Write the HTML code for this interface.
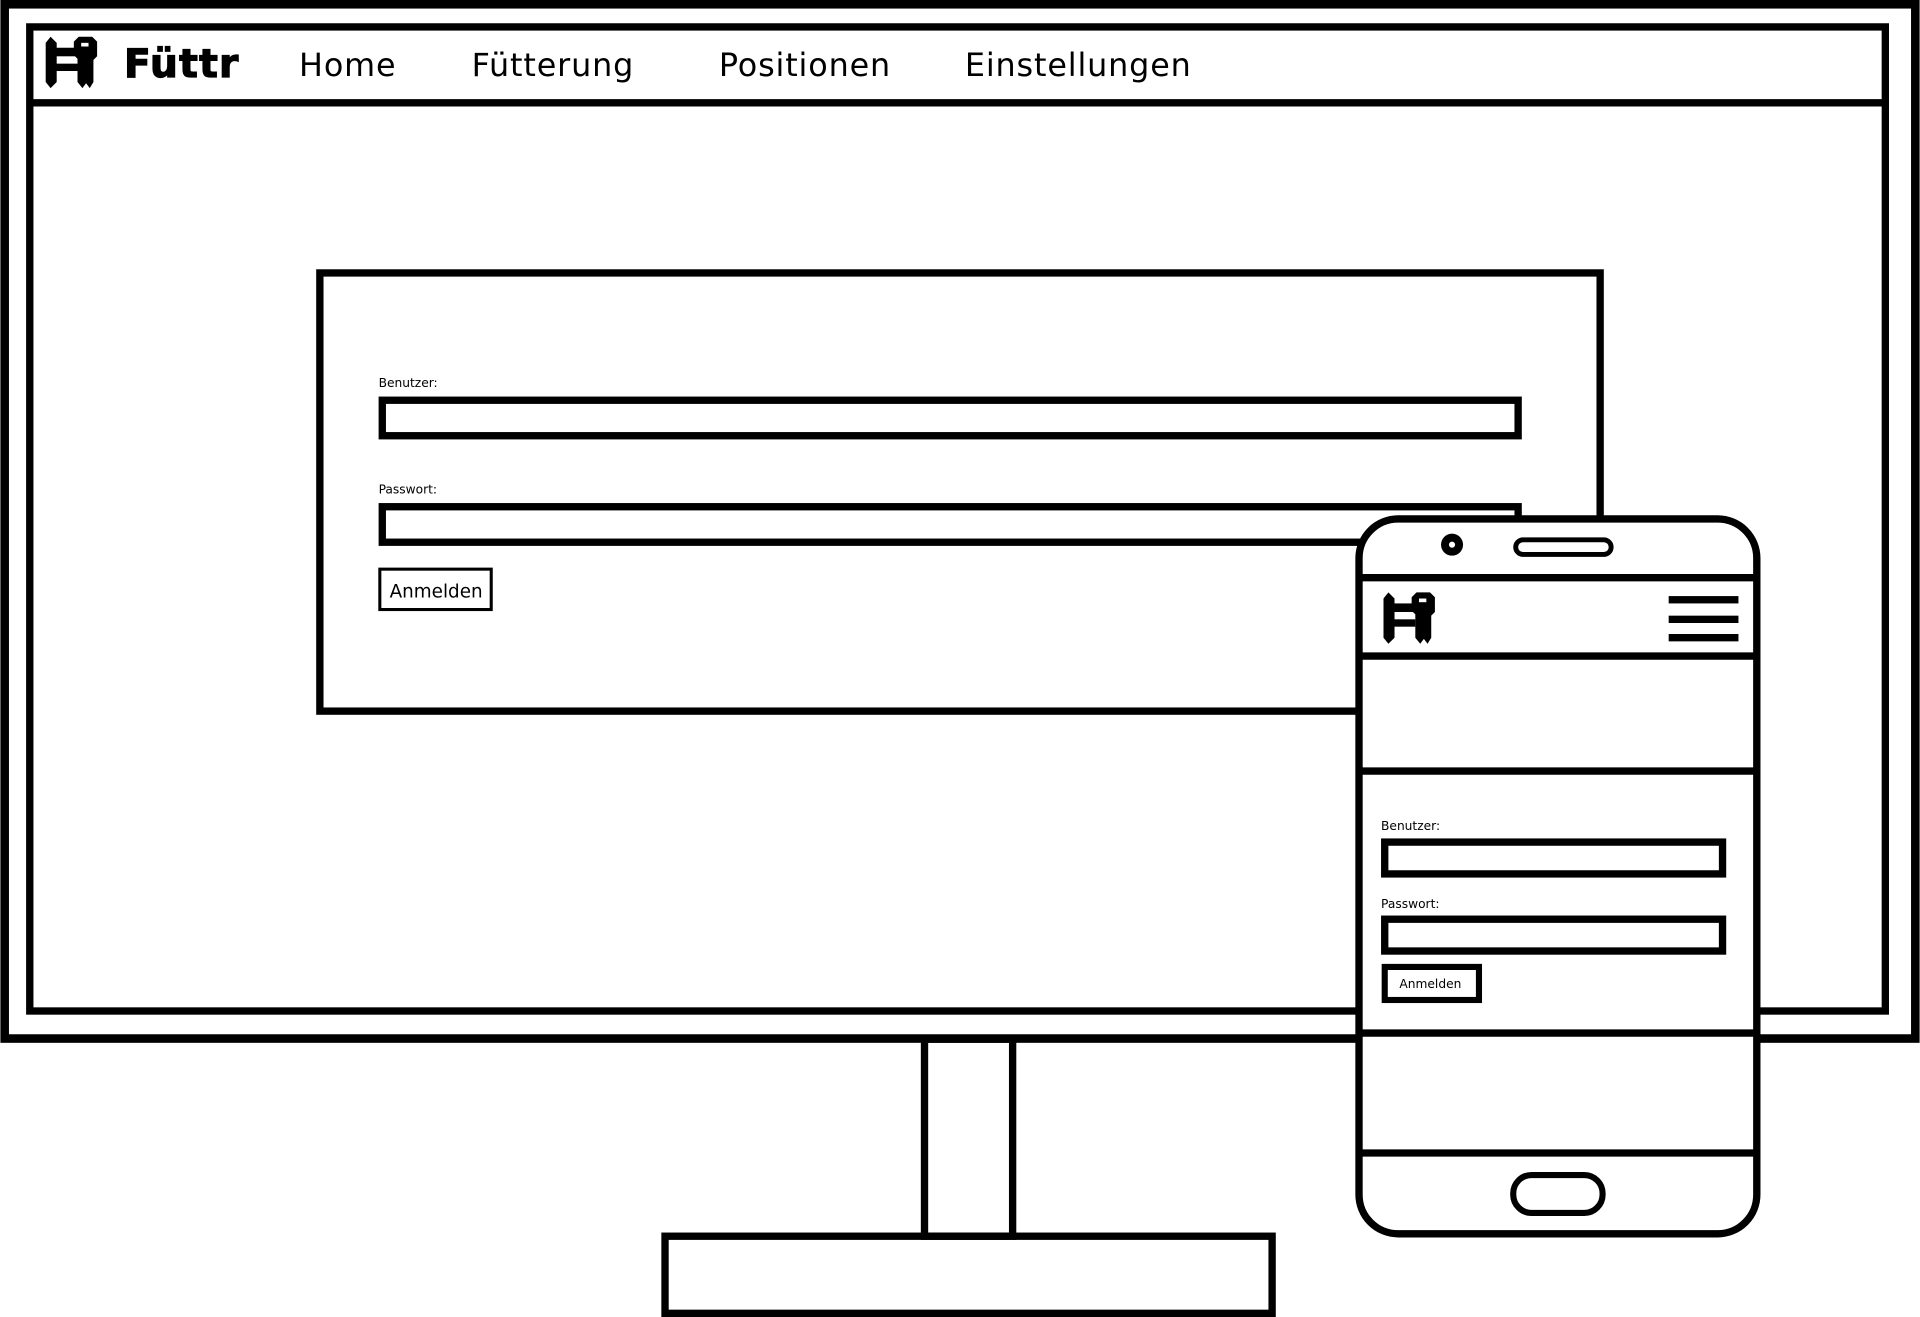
<!DOCTYPE html>
<html><head><meta charset="utf-8"><style>
html,body{margin:0;padding:0;background:#fff;width:1920px;height:1317px;overflow:hidden}
svg{display:block}
text{font-family:"DejaVu Sans","Liberation Sans",sans-serif;fill:#000}
</style></head><body>
<svg width="1920" height="1317" viewBox="0 0 1568 1076" xmlns="http://www.w3.org/2000/svg">
<defs>
<g id="logo">
<path d="M37 35 L41 30 L46 35 L46 67 L41 72 L37 67 Z" fill="#000"/>
<rect x="45" y="39" width="18" height="7" fill="#000"/>
<rect x="45" y="52" width="18" height="6" fill="#000"/>
<path d="M60 34 L64 30 L75 30 L79 34 L79 46 L76 49 L76 67 L73 72 L70 68 L67 72 L63 67 L63 48 L60 45 Z" fill="#000"/>
<rect x="66" y="35" width="6" height="3" fill="#fff"/>
</g>
</defs>
<rect x="3.5" y="3.5" width="1561" height="845" fill="none" stroke="#000" stroke-width="7"/>
<rect x="24" y="22" width="1516" height="804" fill="none" stroke="#000" stroke-width="6"/>
<line x1="24" y1="84" x2="1540" y2="84" stroke="#000" stroke-width="6"/>
<use href="#logo"/>
<text x="101" y="63" font-size="32" font-weight="bold" letter-spacing="1" stroke="#000" stroke-width="1">Füttr</text>
<text x="244" y="62" font-size="26" letter-spacing="0.7">Home</text>
<text x="385" y="62" font-size="26" letter-spacing="0.7">Fütterung</text>
<text x="587" y="62" font-size="26" letter-spacing="0.7">Positionen</text>
<text x="788" y="62" font-size="26" letter-spacing="0.7">Einstellungen</text>
<rect x="261" y="223" width="1046" height="358" fill="none" stroke="#000" stroke-width="6"/>
<text x="309" y="316" font-size="10">Benutzer:</text>
<rect x="312" y="327" width="928" height="29" fill="none" stroke="#000" stroke-width="6"/>
<text x="309" y="403" font-size="10">Passwort:</text>
<rect x="312" y="414" width="928" height="29" fill="none" stroke="#000" stroke-width="6"/>
<rect x="310" y="465" width="91" height="33" fill="#fff" stroke="#000" stroke-width="2.5"/>
<text x="318" y="488" font-size="15">Anmelden</text>
<rect x="755" y="849" width="72" height="161" fill="none" stroke="#000" stroke-width="6"/>
<rect x="543" y="1010" width="496" height="63" fill="none" stroke="#000" stroke-width="6"/>
<rect x="1110" y="424" width="325" height="584" rx="32" fill="#fff" stroke="#000" stroke-width="6"/>
<line x1="1110" y1="472" x2="1435" y2="472" stroke="#000" stroke-width="6"/>
<line x1="1110" y1="536" x2="1435" y2="536" stroke="#000" stroke-width="6"/>
<line x1="1110" y1="630" x2="1435" y2="630" stroke="#000" stroke-width="6"/>
<line x1="1110" y1="844" x2="1435" y2="844" stroke="#000" stroke-width="6"/>
<line x1="1110" y1="942" x2="1435" y2="942" stroke="#000" stroke-width="6"/>
<circle cx="1186" cy="445" r="9" fill="#000"/>
<circle cx="1186" cy="445" r="2.5" fill="#fff"/>
<rect x="1238" y="441" width="78" height="12" rx="6" fill="none" stroke="#000" stroke-width="4"/>
<rect x="1236" y="960" width="73" height="31" rx="15" fill="none" stroke="#000" stroke-width="5"/>
<use href="#logo" transform="translate(1093,454)"/>
<rect x="1363" y="487" width="57" height="6" fill="#000"/>
<rect x="1363" y="503" width="57" height="6" fill="#000"/>
<rect x="1363" y="518" width="57" height="6" fill="#000"/>
<text x="1128" y="678" font-size="10">Benutzer:</text>
<rect x="1131" y="688" width="276" height="26" fill="none" stroke="#000" stroke-width="6"/>
<text x="1128" y="742" font-size="10">Passwort:</text>
<rect x="1131" y="751" width="276" height="26" fill="none" stroke="#000" stroke-width="6"/>
<rect x="1131" y="790" width="77" height="27" fill="none" stroke="#000" stroke-width="5"/>
<text x="1143" y="807" font-size="10">Anmelden</text>
</svg>
</body></html>
